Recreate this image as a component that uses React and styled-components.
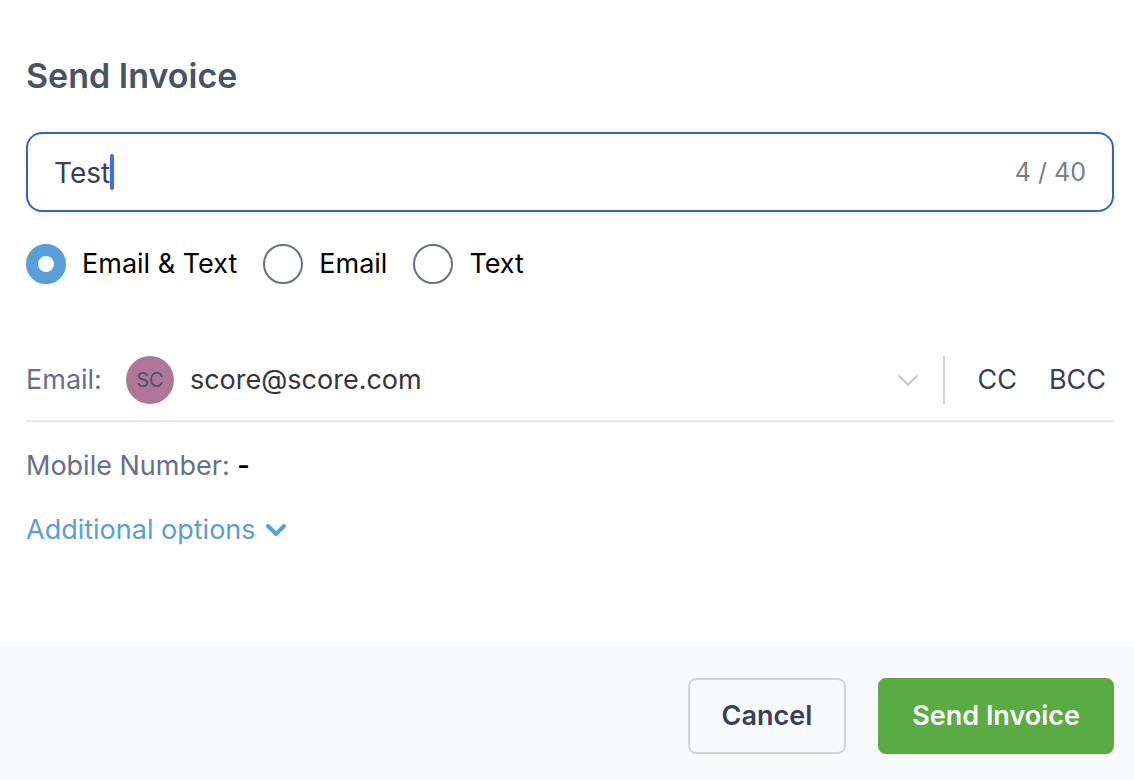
import React, { useState } from "react";
import styled, { createGlobalStyle } from "styled-components";

const colors = {
  title: "#4a5366",
  dark: "#374055",
  label: "#687085",
  muted: "#7a7f85",
  blue: "#2f5fe3",
  caret: "#3a6cf6",
  accent: "#589ed8",
  green: "#59ab44",
  line: "#e9eaf0",
  border: "#d0d5de",
};

const MAX_LENGTH = 40;

const GlobalStyle = createGlobalStyle`
  * {
    box-sizing: border-box;
  }

  body {
    margin: 0;
    background: #fff;
    color: #000;
    font-family: Inter, "Liberation Sans", sans-serif;
    font-size: 27px;
    line-height: 40px;
  }

  button,
  input {
    font: inherit;
  }
`;

const Dialog = styled.form`
  display: flex;
  flex-direction: column;
  min-height: 100vh;
`;

const Content = styled.div`
  flex: 1;
  display: flex;
  flex-direction: column;
  padding: 52px 20px 32px 26px;
`;

const Title = styled.h1`
  margin: 0 0 32px;
  color: ${colors.title};
  font-size: 34px;
  font-weight: 600;
  line-height: 48px;
`;

const SubjectField = styled.label`
  display: flex;
  align-items: center;
  height: 80px;
  padding: 0 26px;
  border: 2px solid ${colors.blue};
  border-radius: 16px;
  box-shadow: 0 2px 4px rgba(16, 24, 40, 0.05);
  cursor: text;
`;

const SubjectInput = styled.input`
  field-sizing: content;
  min-width: 1px;
  padding: 2px 0 0;
  border: 0;
  outline: 0;
  background: transparent;
  color: ${colors.dark};
  font-size: 28px;
  caret-color: transparent;
`;

const Caret = styled.span`
  flex: none;
  width: 4px;
  height: 36px;
  border-radius: 2px;
  background: ${colors.caret};
`;

const Counter = styled.span`
  margin-left: auto;
  color: ${colors.muted};
  font-size: 25px;
`;

const Methods = styled.div`
  display: flex;
  flex-wrap: wrap;
  gap: 26px;
  margin: 32px 0 72px;
`;

const Method = styled.label`
  display: flex;
  align-items: center;
  gap: 16px;
`;

const Radio = styled.input`
  appearance: none;
  width: 40px;
  height: 40px;
  margin: 0;
  border: 2px solid ${colors.label};
  border-radius: 50%;
  background: #fff;

  &:checked {
    border: 12px solid ${colors.accent};
  }
`;

const EmailRow = styled.div`
  display: flex;
  align-items: center;
  padding-bottom: 16px;
  border-bottom: 2px solid ${colors.line};
`;

const Label = styled.span`
  color: ${colors.label};
`;

const Recipient = styled.button`
  flex: 1;
  display: flex;
  align-items: center;
  gap: 16px;
  margin-left: 24px;
  padding: 0 24px 0 0;
  border: 0;
  background: transparent;
  color: #35363a;
  text-align: left;

  svg {
    margin-left: auto;
  }
`;

const Avatar = styled.span`
  display: grid;
  place-items: center;
  width: 48px;
  height: 48px;
  border-radius: 50%;
  background: #b17697;
  color: ${colors.title};
  font-size: 20px;
`;

const CopyActions = styled.div`
  display: flex;
  align-items: center;
  gap: 32px;
  height: 48px;
  padding: 0 8px 0 32px;
  border-left: 2px solid ${colors.border};
`;

const TextButton = styled.button`
  padding: 0;
  border: 0;
  background: transparent;
  color: ${colors.dark};
`;

const Mobile = styled.p`
  margin: 24px 0;
`;

const MobileValue = styled.span`
  font-weight: 600;
`;

const OptionsToggle = styled(TextButton)`
  display: flex;
  align-self: flex-start;
  align-items: center;
  gap: 8px;
  color: ${colors.accent};
`;

const Footer = styled.footer`
  display: flex;
  justify-content: flex-end;
  gap: 32px;
  padding: 32px 20px 26px;
  background: #f9fafc;
`;

const Button = styled.button`
  height: 76px;
  padding: 0 32px;
  border: 2px solid ${({ $primary }) => ($primary ? colors.green : colors.border)};
  border-radius: 8px;
  background: ${({ $primary }) => ($primary ? colors.green : "transparent")};
  color: ${({ $primary }) => ($primary ? "#fff" : colors.dark)};
  font-weight: 600;
`;

const methods = ["Email & Text", "Email", "Text"];

function ThinChevron() {
  return (
    <svg width="22" height="12" viewBox="0 0 22 12" fill="none" aria-hidden="true">
      <path d="M1.5 1.5 11 10.5 20.5 1.5" stroke="#c6c6c8" strokeWidth="2" />
    </svg>
  );
}

function BoldChevron() {
  return (
    <svg width="24" height="16" viewBox="0 0 24 16" fill="none" aria-hidden="true">
      <path
        d="M4 4 12 12 20 4"
        stroke="currentColor"
        strokeWidth="4"
        strokeLinecap="round"
        strokeLinejoin="round"
      />
    </svg>
  );
}

function App() {
  const [subject, setSubject] = useState("Test");
  const [method, setMethod] = useState(methods[0]);

  return (
    <>
      <GlobalStyle />
      <Dialog onSubmit={(e) => e.preventDefault()}>
        <Content>
          <Title>Send Invoice</Title>
          <SubjectField>
            <SubjectInput
              aria-label="Subject"
              value={subject}
              maxLength={MAX_LENGTH}
              onChange={(e) => setSubject(e.target.value)}
            />
            <Caret />
            <Counter>
              {subject.length} / {MAX_LENGTH}
            </Counter>
          </SubjectField>
          <Methods role="radiogroup" aria-label="Send by">
            {methods.map((name) => (
              <Method key={name}>
                <Radio
                  type="radio"
                  name="method"
                  value={name}
                  checked={method === name}
                  onChange={() => setMethod(name)}
                />
                {name}
              </Method>
            ))}
          </Methods>
          <EmailRow>
            <Label id="email-label">Email:</Label>
            <Recipient type="button" aria-haspopup="listbox" aria-describedby="email-label">
              <Avatar>SC</Avatar>
              score@score.com
              <ThinChevron />
            </Recipient>
            <CopyActions>
              <TextButton type="button">CC</TextButton>
              <TextButton type="button">BCC</TextButton>
            </CopyActions>
          </EmailRow>
          <Mobile>
            <Label>Mobile Number:</Label> <MobileValue>-</MobileValue>
          </Mobile>
          <OptionsToggle type="button" aria-expanded="false">
            Additional options
            <BoldChevron />
          </OptionsToggle>
        </Content>
        <Footer>
          <Button type="button">Cancel</Button>
          <Button type="submit" $primary>
            Send Invoice
          </Button>
        </Footer>
      </Dialog>
    </>
  );
}

export default App;
